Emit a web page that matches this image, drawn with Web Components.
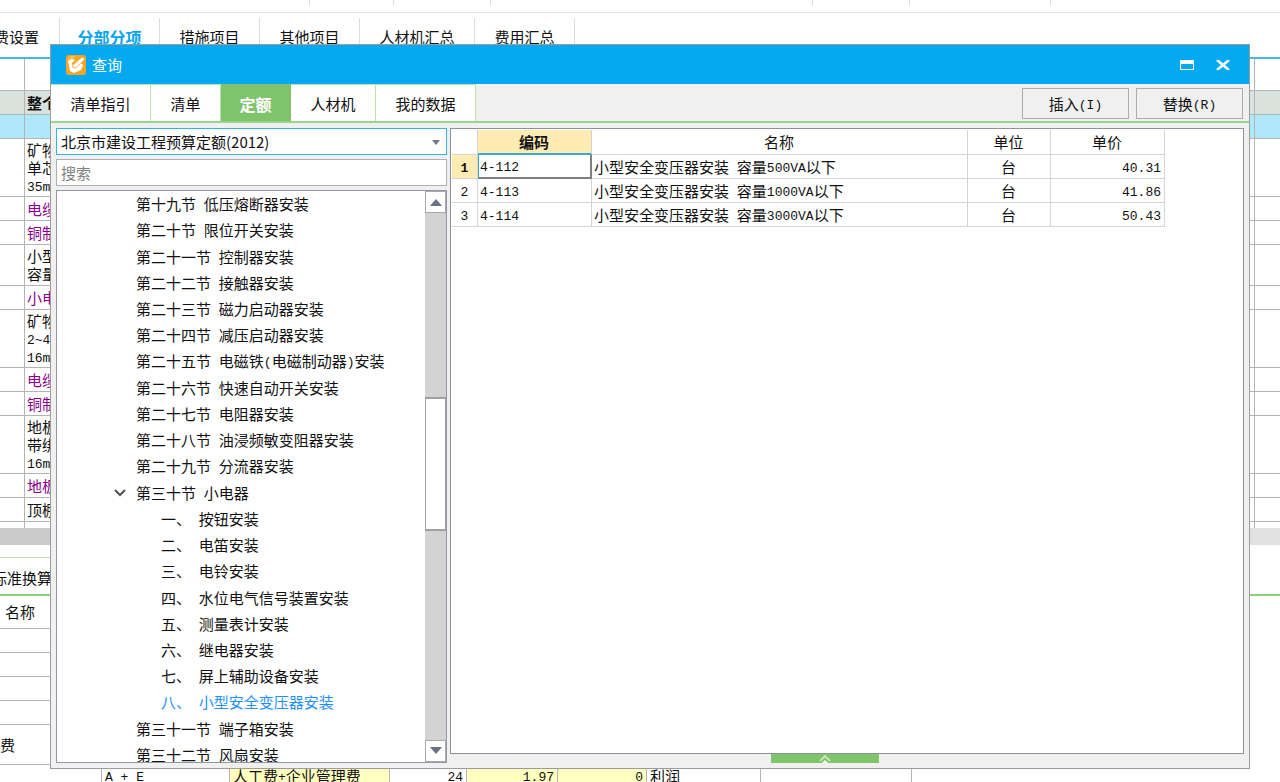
<!DOCTYPE html>
<html lang="zh-CN">
<head>
<meta charset="utf-8">
<title>查询</title>
<style>
html,body{margin:0;height:100%}
body{overflow:hidden;background:#fff;color:#111;font:15px/18px "Noto Sans CJK SC",sans-serif}
</style>
</head>
<body>
<cost-app>
  <toolbar-strip></toolbar-strip>
  <project-tabs></project-tabs>
  <project-sheet></project-sheet>
  <detail-pane></detail-pane>
  <query-dialog slot="overlay" heading="查询">
    <query-tabs slot="tabs"></query-tabs>
    <catalog-panel slot="side"></catalog-panel>
    <result-grid slot="main"></result-grid>
  </query-dialog>
</cost-app>
<script>
// Latin runs are set in a half-width face beside the full-width Chinese.
const t = s => s.replace(/[\x20-\x7e]+/g, m => `<span class="n">${m}</span>`);
const base = `<style>
*,:host{box-sizing:border-box}
:host{display:block}
:host([hidden]){display:none}
.n{font-family:"Liberation Mono",monospace;font-size:13px;line-height:0;vertical-align:1px}
button,input,select{font:inherit;color:inherit;margin:0;padding:0;border:0;background:none;border-radius:0}
table{border-collapse:separate;border-spacing:0;table-layout:fixed}
th,td{padding:0;font-weight:400;text-align:left}
ul{list-style:none;margin:0;padding:0}
</style>`;
const define = (name, html) => customElements.define(name, class extends HTMLElement {
  constructor() {
    super();
    this.attachShadow({mode: 'open'}).innerHTML = base + (typeof html === 'function' ? html(this) : html);
  }
});

define('cost-app', `<style>
:host{position:relative;height:100vh;overflow:hidden}
</style><slot></slot><slot name="overlay"></slot>`);

define('toolbar-strip', `<style>
:host{display:flex;height:13px;border-bottom:1px solid #e4e4e4}
i{height:5px;border-right:1px solid #dcdcdc}
</style>` + [310,84,97,322,97,141].map(w => `<i style="width:${w}px"></i>`).join(''));

define('project-tabs', `<style>
:host{display:flex;height:46px;padding-top:5px;border-bottom:2px solid #47b6e3}
button{width:100px;border-right:1px solid #dcdcdc;white-space:nowrap;padding-bottom:1px}
.first{width:60px;display:flex;justify-content:flex-end;align-items:center;padding-right:20px}
.wide{width:115px}
.on{color:#04a4ee;font-weight:700;font-size:16px}
</style><button class="first">费设置</button><button class="on">分部分项</button><button>措施项目</button><button>其他项目</button><button class="wide">人材机汇总</button><button>费用汇总</button>`);

const items = [
  ['', 'head'], ['<b>整个</b>', 'total'], ['', 'sel'],
  ['矿物<br>单芯<br>35mm', 'tall'], ['电缆', 'sub'], ['铜制', 'sub'], ['小型<br>容量', 'mid'], ['小电', 'sub'],
  ['矿物<br>2~4<br>16mm', 'tall'], ['电缆', 'sub'], ['铜制', 'sub'], ['地板<br>带绑<br>16mm', 'tall'], ['地板', 'sub'], ['顶棚', ''], ['', 'end']];
const lines = h => h.split(/(<[^>]+>)/).map(p => p[0] === '<' ? p : t(p)).join('');
define('project-sheet', `<style>
:host{background:linear-gradient(90deg,#cbcbcb 50%,#e1e1e1 50%);padding-bottom:17px}
table{width:100%;background:#fff}
td{height:24px;border-bottom:1px solid #b4b4b4;border-right:1px solid #b4b4b4;overflow:hidden;white-space:nowrap;padding-left:2px}
td:last-child{border-right:0}
.head td{height:32px}
.total td{background:#d9e2dc}
.sel td{background:#aee8fa}
.tall td{height:58px}
.mid td{height:41px}
.sub td{color:#8b008b}
.end td{height:6px;border-bottom:0}
.a{width:25px}.c{width:25px}
</style><table><colgroup><col class="a"><col><col class="c"></colgroup>
${items.map(([s, c]) => `<tr class="${c}"><td></td><td>${lines(s)}</td><td></td></tr>`).join('')}</table>`);

define('detail-pane', `<style>
nav{height:51px;padding-top:12px;border-bottom:2px solid #8fd07f}
nav button{display:flex;justify-content:flex-end;align-items:center;width:52px;height:36px;padding-top:4px;white-space:nowrap}
.bar{border-top:1px solid #b9e3ab;width:90%;height:37px}
table{width:912px}
td,th{height:24px;border-bottom:1px solid #b4b4b4;white-space:nowrap}
th{height:33px;padding-left:5px}
.fee td{height:40px}
.calc td{border-right:1px solid #b4b4b4;padding:0 3px 4px;height:26px}
.y{background:#ffffc0}
.calc .r{text-align:right}
</style><nav><div class="bar"><button>标准换算</button></div></nav>
<table><colgroup>${[102,128,160,77,91,89,114,151].map(w => `<col style="width:${w}px">`).join('')}</colgroup>
<tr><th colspan="8">名称</th></tr>${'<tr><td colspan="8"></td></tr>'.repeat(4)}
<tr class="fee"><td colspan="8">费</td></tr>
<tr class="calc"><td></td><td>${t('A + E')}</td><td class="y">${t('人工费+企业管理费')}</td><td class="r">${t('24')}</td><td class="y r">${t('1.97')}</td><td class="y r">${t('0')}</td><td>利润</td><td></td></tr></table>`);

define('query-dialog', el => `<style>
:host{position:absolute;inset:44px 30px 13px 50px;display:flex;flex-direction:column;border:1px solid #9c9c9c;background:#f0f0f0}
header{display:flex;align-items:center;height:39px;flex:none;background:#04a9f2;color:#fff;padding:0 8px 0 15px}
h1{font:inherit;margin:0 auto 0 6px}
header button{width:36px;height:30px;display:grid;place-items:center}
svg{display:block}
main{flex:1;min-height:0;display:grid;grid-template-columns:391px minmax(0,1fr);gap:3px;padding:5px}
::slotted(*){min-height:0}
</style>
<header><svg width="20" height="20" viewBox="0 0 20 20"><rect width="20" height="20" rx="3" fill="#f7a325"/><path d="M1 5 4 1h6L4 7z" fill="#ffd35c" opacity=".6"/><path d="M2 6 6 4l3 1-3 3 1 5 6-3 2-2 2 2-2 5-7 3-4-2z" fill="#fff"/><path d="m7 10 9-8 3 2-8 8-4 1z" fill="#fff" stroke="#f7a325" stroke-width=".7"/></svg>
<h1>${el.getAttribute('heading')}</h1>
<button aria-label="最大化"><svg width="14" height="10" viewBox="0 0 14 10"><path d="M.5.5h13v9H.5z" fill="none" stroke="#fff"/><path d="M0 0h14v4H0z" fill="#fff"/></svg></button>
<button aria-label="关闭"><svg width="14" height="10" viewBox="0 0 14 10"><path d="M1 0 13 10M13 0 1 10" stroke="#fff" stroke-width="2.6"/></svg></button></header>
<slot name="tabs"></slot>
<main><slot name="side"></slot><slot name="main"></slot></main>`);

define('query-tabs', `<style>
:host{display:flex;flex:none;height:39px;border-bottom:2px solid #9ad48a;padding-right:6px}
.tab{width:100px;background:#fff;border-right:1px solid #b8e6aa;border-top:1px solid #b8e6aa;padding-top:2px}
.s{width:70px}.m{width:85px}
.on{background:#7fc36a;border-color:#7fc36a;color:#fff;font-weight:700;font-size:16px}
.act{width:107px;height:31px;margin:4px 0 0 7px;border:1px solid #adadad}
.gap{flex:1}
</style><button class="tab">清单指引</button><button class="tab s">清单</button><button class="tab s on">定额</button><button class="tab m">人材机</button><button class="tab">我的数据</button><span class="gap"></span>
<button class="act">${t('插入(I)')}</button><button class="act">${t('替换(R)')}</button>`);

const sections = ['第十九节 低压熔断器安装','第二十节 限位开关安装','第二十一节 控制器安装','第二十二节 接触器安装','第二十三节 磁力启动器安装','第二十四节 减压启动器安装','第二十五节 电磁铁(电磁制动器)安装','第二十六节 快速自动开关安装','第二十七节 电阻器安装','第二十八节 油浸频敏变阻器安装','第二十九节 分流器安装','>第三十节 小电器','-一、 按钮安装','-二、 电笛安装','-三、 电铃安装','-四、 水位电气信号装置安装','-五、 测量表计安装','-六、 继电器安装','-七、 屏上辅助设备安装','*八、 小型安全变压器安装','第三十一节 端子箱安装','第三十二节 风扇安装'];
const node = s => {
  const k = s[0], c = {'>': 'open', '-': 'leaf', '*': 'leaf cur'}[k] || '';
  return `<li role="treeitem" class="${c}">${k === '>' ? '<svg width="12" height="8" viewBox="0 0 12 8"><path d="m1 1 5 5 5-5" fill="none" stroke="#555" stroke-width="2.2"/></svg>' : ''}<span>${t(c ? s.slice(1) : s)}</span></li>`;
};
define('catalog-panel', `<style>
:host{display:flex;flex-direction:column;gap:4px}
.combo{position:relative;flex:none;height:27px}
select{appearance:none;width:100%;height:27px;border:1px solid #35b3e6;background:#fff;padding:0 20px 0 4px}
.combo svg{position:absolute;right:7px;top:12px;pointer-events:none}
input{flex:none;width:100%;height:27px;border:1px solid #b0b0b0;background:#fff;padding:0 4px}
input::placeholder{color:#808080;opacity:1}
.tree{flex:1;min-height:0;display:flex;border:1px solid #9197a3;background:#fff}
.view{flex:1;overflow:hidden}
ul{display:grid;grid-auto-rows:1fr;height:calc(100% + 6px)}
li{display:flex;align-items:center;padding-left:79px;white-space:nowrap;min-height:0;overflow:hidden}
.open{padding-left:57px;gap:10px}
.leaf{padding-left:104px}
.cur{color:#1e90ff}
.bar{width:21px;display:flex;flex-direction:column;background:#d3d3d3}
.bar button{flex:none;height:22px;background:#fff;border:1px solid #a9a9a9;display:grid;place-items:center}
.u{flex:185}.thumb{flex:131;background:#fff;border:1px solid #a0a0a0;border-width:2px 1px}.d{flex:210}
</style>
<div class="combo"><select aria-label="定额库"><option>北京市建设工程预算定额(2012)</option></select><svg width="8" height="5" viewBox="0 0 8 5"><path d="M0 0h8L4 5z" fill="#71778a"/></svg></div>
<input type="text" aria-label="搜索" placeholder="搜索">
<div class="tree"><div class="view"><ul role="tree">${sections.map(node).join('')}</ul></div>
<div class="bar"><button aria-label="向上"><svg width="12" height="7" viewBox="0 0 12 7"><path d="M0 7h12L6 0z" fill="#6b7183"/></svg></button><span class="u"></span><span class="thumb"></span><span class="d"></span><button aria-label="向下"><svg width="12" height="7" viewBox="0 0 12 7"><path d="M0 0h12L6 7z" fill="#6b7183"/></svg></button></div></div>`);

const rows = [['4-112','小型安全变压器安装 容量500VA以下','40.31'],['4-113','小型安全变压器安装 容量1000VA以下','41.86'],['4-114','小型安全变压器安装 容量3000VA以下','50.43']];
define('result-grid', `<style>
:host{display:flex;flex-direction:column}
.box{flex:1;min-height:0;border:1px solid #8c929c;background:#fff;padding:1px 0 0 1px}
table{width:713px}
th,td{border-right:1px solid #d4d4d4;border-bottom:1px solid #d4d4d4;height:24px;white-space:nowrap;padding:0 3px 0 2px}
th{text-align:center}
thead th{height:25px}
.hot{background:#ffecb3;font-weight:700;border-bottom:2px solid #36a9d8}
tbody th:first-child{padding:0}
.act th{background:#ffecb3;font-weight:700}
.act .code{border:1px solid #36a9d8;border-width:0 2px 2px 1px;border-right-color:#808080;border-bottom-color:#808080;padding-left:1px}
.c{text-align:center}.r{text-align:right}
.pull{align-self:center;width:108px;height:9px;background:#80c46c;margin-left:-44px;display:grid;place-items:center}
</style>
<div class="box"><table><colgroup>${[26,114,376,83,114].map(w => `<col style="width:${w}px">`).join('')}</colgroup>
<thead><tr><th></th><th class="hot">编码</th><th>名称</th><th>单位</th><th>单价</th></tr></thead>
<tbody>${rows.map((r, i) => `<tr class="${i ? '' : 'act'}"><th>${t(String(i + 1))}</th><td class="code">${t(r[0])}</td><td>${t(r[1])}</td><td class="c">台</td><td class="r">${t(r[2])}</td></tr>`).join('')}</tbody></table></div>
<button class="pull" aria-label="展开"><svg width="12" height="8" viewBox="0 0 12 8"><path d="m1 6 5-5 5 5" fill="none" stroke="#d5efcb" stroke-width="1.5"/><path d="m3 8 3-3 3 3z" fill="#fff"/></svg></button>`);
</script>
</body>
</html>
